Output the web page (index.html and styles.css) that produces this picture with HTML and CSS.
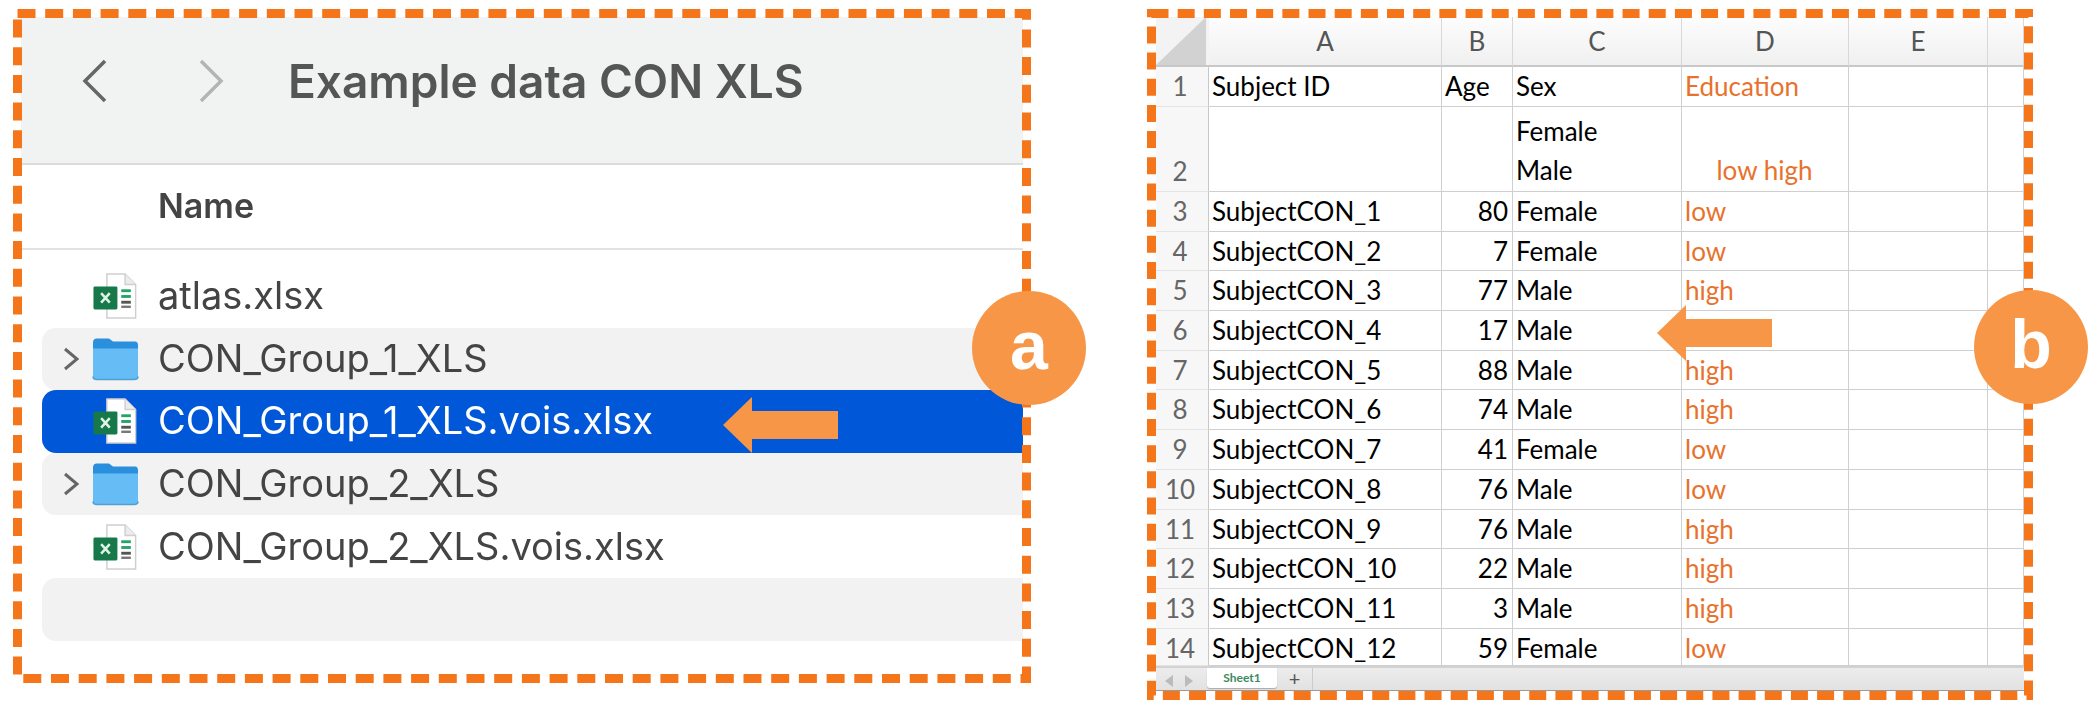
FILE: index.html
```html
<!DOCTYPE html>
<html lang="en">
<head>
    <meta charset="UTF-8">
    <meta name="viewport" content="width=device-width, initial-scale=1.0">
    <title>Example data CON XLS</title>
    <link rel="stylesheet" href="styles.css">
</head>
<body>

    <svg class="defs" width="0" height="0">
        <symbol id="xls" viewBox="0 0 46 48">
            <path d="M14 1H33L44 12V47H14Z" fill="#fff" stroke="#cfcfcf" stroke-width="1.5"/>
            <path d="M33 1V12H44" fill="#ececec" stroke="#cfcfcf" stroke-width="1.5"/>
            <rect x="0" y="14" width="25" height="24" rx="1.5" fill="#17784a"/>
            <path d="M8 21L17 31M17 21L8 31" stroke="#dff2e6" stroke-width="2.6"/>
            <rect x="29" y="17" width="10" height="3" fill="#25a468"/>
            <rect x="29" y="23" width="10" height="3" fill="#25a468"/>
            <rect x="29" y="29" width="10" height="3" fill="#555"/>
            <rect x="29" y="34" width="10" height="2.5" fill="#777"/>
        </symbol>
        <symbol id="folder" viewBox="0 0 47 43">
            <path d="M1 5Q1 1 5 1H17L21 4H43Q46 4 46 8V38Q46 42 42 42H5Q1 42 1 38Z" fill="#2a8fdc"/>
            <path d="M1 11H46V38Q46 42 42 42H5Q1 42 1 38Z" fill="#66bdf6"/>
            <path d="M1 39Q1 42 5 42H42Q46 42 46 39" fill="none" stroke="#4f9fd6" stroke-width="1.5"/>
        </symbol>
        <symbol id="chev" viewBox="0 0 16 24">
            <path d="M2 2L14 12L2 22" fill="none" stroke="#666" stroke-width="3"/>
        </symbol>
    </svg>

    <div class="page">

        <div class="panel panel-a">
            <div class="toolbar">
                <svg class="nav" viewBox="0 0 25 44"><path d="M23 2L3 22L23 42" fill="none" stroke="#666" stroke-width="3.5"/></svg>
                <svg class="nav nav-next" viewBox="0 0 25 44"><path d="M2 2L22 22L2 42" fill="none" stroke="#b4b4b4" stroke-width="3.5"/></svg>
                <div class="toolbar-title">Example data CON XLS</div>
            </div>
            <div class="name-head">Name</div>
            <div class="file-list">
                <div class="file-row">
                    <span></span>
                    <svg class="file-icon"><use href="#xls"/></svg>
                    <span class="file-name">atlas.xlsx</span>
                </div>
                <div class="file-row striped">
                    <svg class="chev"><use href="#chev"/></svg>
                    <svg class="file-icon"><use href="#folder"/></svg>
                    <span class="file-name">CON_Group_1_XLS</span>
                </div>
                <div class="file-row selected">
                    <span></span>
                    <svg class="file-icon"><use href="#xls"/></svg>
                    <span class="file-name">CON_Group_1_XLS.vois.xlsx</span>
                </div>
                <div class="file-row striped">
                    <svg class="chev"><use href="#chev"/></svg>
                    <svg class="file-icon"><use href="#folder"/></svg>
                    <span class="file-name">CON_Group_2_XLS</span>
                </div>
                <div class="file-row">
                    <span></span>
                    <svg class="file-icon"><use href="#xls"/></svg>
                    <span class="file-name">CON_Group_2_XLS.vois.xlsx</span>
                </div>
                <div class="file-row striped"></div>
            </div>

            <svg class="frame frame-a" viewBox="0 0 1018 674"><rect x="4.5" y="4.5" width="1009" height="665"/></svg>
            <svg class="arrow arrow-a" viewBox="0 0 115 56"><path d="M0 28L29 0V14H115V42H29V56Z"/></svg>
            <div class="badge badge-a">a</div>
        </div>

        <div class="panel panel-b">
            <div class="sheet">
                <div class="grid">
                    <div class="corner"><svg viewBox="0 0 50 48"><path d="M0 48L50 0V48Z" fill="#d2d2d2"/></svg></div>
                    <div class="col">A</div><div class="col">B</div><div class="col">C</div><div class="col">D</div><div class="col">E</div><div class="col"></div>

                    <div class="num">1</div><div class="cell">Subject ID</div><div class="cell">Age</div><div class="cell">Sex</div><div class="cell edu">Education</div><div class="cell"></div><div class="cell"></div>
                    <div class="num bottom">2</div><div class="cell"></div><div class="cell"></div><div class="cell bottom">Female<br>Male</div><div class="cell edu mid bottom">low high</div><div class="cell"></div><div class="cell"></div>
                    <div class="num">3</div><div class="cell">SubjectCON_1</div><div class="cell right">80</div><div class="cell">Female</div><div class="cell edu">low</div><div class="cell"></div><div class="cell"></div>
                    <div class="num">4</div><div class="cell">SubjectCON_2</div><div class="cell right">7</div><div class="cell">Female</div><div class="cell edu">low</div><div class="cell"></div><div class="cell"></div>
                    <div class="num">5</div><div class="cell">SubjectCON_3</div><div class="cell right">77</div><div class="cell">Male</div><div class="cell edu">high</div><div class="cell"></div><div class="cell"></div>
                    <div class="num">6</div><div class="cell">SubjectCON_4</div><div class="cell right">17</div><div class="cell">Male</div><div class="cell edu"></div><div class="cell"></div><div class="cell"></div>
                    <div class="num">7</div><div class="cell">SubjectCON_5</div><div class="cell right">88</div><div class="cell">Male</div><div class="cell edu">high</div><div class="cell"></div><div class="cell"></div>
                    <div class="num">8</div><div class="cell">SubjectCON_6</div><div class="cell right">74</div><div class="cell">Male</div><div class="cell edu">high</div><div class="cell"></div><div class="cell"></div>
                    <div class="num">9</div><div class="cell">SubjectCON_7</div><div class="cell right">41</div><div class="cell">Female</div><div class="cell edu">low</div><div class="cell"></div><div class="cell"></div>
                    <div class="num">10</div><div class="cell">SubjectCON_8</div><div class="cell right">76</div><div class="cell">Male</div><div class="cell edu">low</div><div class="cell"></div><div class="cell"></div>
                    <div class="num">11</div><div class="cell">SubjectCON_9</div><div class="cell right">76</div><div class="cell">Male</div><div class="cell edu">high</div><div class="cell"></div><div class="cell"></div>
                    <div class="num">12</div><div class="cell">SubjectCON_10</div><div class="cell right">22</div><div class="cell">Male</div><div class="cell edu">high</div><div class="cell"></div><div class="cell"></div>
                    <div class="num">13</div><div class="cell">SubjectCON_11</div><div class="cell right">3</div><div class="cell">Male</div><div class="cell edu">high</div><div class="cell"></div><div class="cell"></div>
                    <div class="num">14</div><div class="cell">SubjectCON_12</div><div class="cell right">59</div><div class="cell">Female</div><div class="cell edu">low</div><div class="cell"></div><div class="cell"></div>
                </div>
                <div class="tabs">
                    <div class="tab-arrows">
                        <svg viewBox="0 0 8 12"><path d="M8 0V12L0 6Z"/></svg>
                        <svg viewBox="0 0 8 12"><path d="M0 0V12L8 6Z"/></svg>
                    </div>
                    <div class="tab">Sheet1</div>
                    <div class="tab-add">+</div>
                </div>
            </div>

            <svg class="frame frame-b" viewBox="0 0 886 691"><rect x="4.5" y="4.5" width="877" height="682"/></svg>
            <svg class="arrow arrow-b" viewBox="0 0 115 56"><path d="M0 28L29 0V14H115V42H29V56Z"/></svg>
            <div class="badge badge-b">b</div>
        </div>

    </div>

</body>
</html>
```

FILE: styles.css
```css
body {
    margin: 0;
    background-color: #fff;
}

.defs {
    position: absolute;
}

.page {
    display: flex;
    align-items: flex-start;
    gap: 116px;
    width: 2100px;
    height: 709px;
    padding: 9px 0 0 13px;
    box-sizing: border-box;
    overflow: hidden;
}

.panel {
    position: relative;
    flex: none;
    box-sizing: border-box;
}

.panel-a {
    width: 1018px;
    height: 674px;
    padding: 8px 8px 0;
    font-family: Inter, sans-serif;
    color: #444;
}

.panel-b {
    width: 886px;
    height: 691px;
    padding: 8px 9px 0;
    font-family: Lato, sans-serif;
}

/* dashed outlines and overlays */
.frame {
    position: absolute;
    top: 0;
    left: 0;
    fill: none;
    stroke: #f5761a;
    stroke-width: 9;
}

.frame-a {
    width: 1018px;
    height: 674px;
    stroke-dasharray: 18 9.7;
}

.frame-b {
    width: 886px;
    height: 691px;
    stroke-dasharray: 17 9.17;
}

.arrow {
    position: absolute;
    width: 115px;
    height: 56px;
    fill: #f79646;
}

.arrow-a {
    left: 710px;
    top: 388px;
}

.arrow-b {
    left: 510px;
    top: 296px;
}

.badge {
    position: absolute;
    width: 114px;
    height: 114px;
    border-radius: 50%;
    background-color: #f79646;
    color: #fff;
    font-family: "Liberation Sans", sans-serif;
    font-weight: bold;
    font-size: 68px;
    line-height: 108px;
    text-align: center;
}

.badge-a {
    left: 959px;
    top: 282px;
}

.badge-b {
    left: 827px;
    top: 281px;
}

/* finder window */
.toolbar {
    display: flex;
    align-items: center;
    height: 148px;
    padding-left: 61px;
    padding-bottom: 18px;
    box-sizing: border-box;
    background-color: #f1f2f2;
    border-bottom: 2px solid #dcdcdc;
}

.nav {
    width: 25px;
    height: 44px;
    margin-right: 92px;
}

.nav-next {
    margin-right: 64px;
}

.toolbar-title {
    font-size: 46px;
    font-weight: 600;
    color: #555;
    filter: blur(0.7px);
}

.name-head {
    height: 83px;
    line-height: 82px;
    padding-left: 137px;
    font-size: 34px;
    font-weight: 600;
    border-bottom: 2px solid #e2e2e2;
    filter: blur(0.6px);
}

.file-list {
    padding: 15px 0 0 21px;
}

.file-row {
    display: grid;
    grid-template-columns: 50px 66px 1fr;
    align-items: center;
    height: 62.6px;
    font-size: 38px;
    border-radius: 14px 0 0 14px;
}

.file-name {
    margin-top: -2px;
    filter: blur(0.6px);
}

.striped {
    background-color: #f2f2f2;
}

.selected {
    background-color: #0058d8;
    color: #fff;
}

.file-icon {
    width: 47px;
    height: 46px;
}

.chev {
    width: 16px;
    height: 24px;
    margin-left: 21px;
}

/* spreadsheet */
.sheet {
    width: 868px;
    overflow: hidden;
}

.grid {
    display: grid;
    grid-template-columns: 53px 233px 71px 169px 167px 139px 36px;
    grid-template-rows: 50px 40px 85px repeat(11, 39.7px) 37px;
    font-size: 26px;
    color: #000;
}

.corner {
    background-color: #f3f3f3;
    border-bottom: 2px solid #c8c8c8;
    padding-right: 2px;
    box-sizing: border-box;
}

.corner svg {
    display: block;
    width: 50px;
    height: 48px;
}

.col {
    display: flex;
    align-items: center;
    justify-content: center;
    color: #555;
    background: linear-gradient(#fdfdfd, #f0f0f0);
    border-right: 1px solid #d8d8d8;
    border-bottom: 2px solid #c8c8c8;
    box-sizing: border-box;
}

.num {
    display: flex;
    align-items: flex-start;
    justify-content: center;
    padding-right: 4px;
    line-height: 39px;
    overflow: hidden;
    color: #666;
    background-color: #f7f7f7;
    border-right: 1px solid #c8c8c8;
    border-bottom: 1px solid #e4e4e4;
    box-sizing: border-box;
}

.num.bottom {
    align-items: flex-end;
}

.cell {
    padding: 0 4px 0 3px;
    line-height: 39px;
    display: flex;
    flex-direction: column;
    justify-content: flex-start;
    overflow: hidden;
    white-space: nowrap;
    border-right: 1px solid #d0d0d0;
    border-bottom: 1px solid #cfcfcf;
    box-sizing: border-box;
}

.cell.bottom {
    display: block;
    padding-top: 5px;
}

.right {
    align-items: flex-end;
}

.edu {
    color: #e8722c;
}

.cell.mid {
    padding-top: 44px;
    text-align: center;
}

.tabs {
    display: flex;
    align-items: flex-start;
    height: 25px;
    background: linear-gradient(#ececec, #e2e2e2);
    border-top: 2px solid #d2d2d2;
    border-bottom: 1px solid #9a9a9a;
    box-sizing: border-box;
}

.tab-arrows {
    display: flex;
    gap: 12px;
    width: 51px;
    padding: 7px 0 0 9px;
    box-sizing: border-box;
}

.tab-arrows svg {
    width: 8px;
    height: 12px;
    fill: #bbb;
}

.tab {
    width: 70px;
    height: 20px;
    line-height: 19px;
    text-align: center;
    font-size: 12px;
    font-weight: bold;
    color: #3c8a5c;
    background-color: #fff;
    border-radius: 0 0 3px 3px;
    box-shadow: 0 1px 1px #aaa;
}

.tab-add {
    width: 35px;
    height: 22px;
    line-height: 20px;
    text-align: center;
    font-size: 20px;
    color: #555;
    border-right: 1px solid #ccc;
}
```
